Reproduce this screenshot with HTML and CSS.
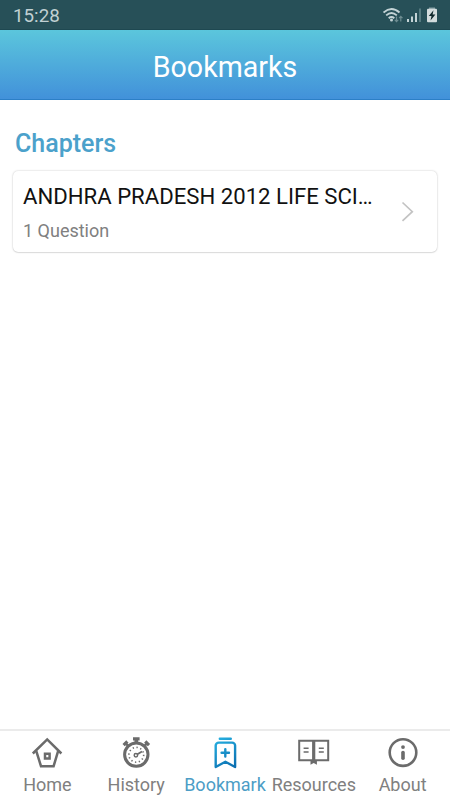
FILE: index.html
```
<!DOCTYPE html>
<html lang="en">
<head>
  <meta charset="UTF-8">
  <meta name="viewport" content="width=device-width, initial-scale=1.0">
  <title>Bookmarks</title>
  <link rel="stylesheet" href="styles.css">
</head>
<body>
  <div class="status-bar">
    <span class="clock">15:28</span>
    <svg class="status-icons" width="56" height="18" viewBox="0 0 56 18">
      <!-- wifi -->
      <g fill="none" stroke="#c3d3d6" stroke-width="1.9">
        <path d="M0.5 5.5Q8.5 -1.5 16.5 5.5"/>
        <path d="M3.2 8.4Q8.5 3.8 13.8 8.4"/>
        <path d="M5.7 11.2Q8.5 8.8 11.3 11.2"/>
      </g>
      <circle cx="8.5" cy="13" r="1.5" fill="#c3d3d6"/>
      <path d="M13.5 9.5v5M11.8 12.8l1.7 1.9 1.7-1.9M17.8 14.5v-5M16.1 11.2l1.7-1.9 1.7 1.9" fill="none" stroke="#6d8c91" stroke-width="1.2"/>
      <!-- signal -->
      <path d="M25 15v-3M29 15v-5.5M33 15V6" stroke="#c3d3d6" stroke-width="2"/>
      <path d="M37 15V1.5" stroke="#557a80" stroke-width="2"/>
      <!-- battery -->
      <path d="M46 0.5h6v2h-6z" fill="#829da1"/>
      <rect x="44" y="1.8" width="10" height="13.4" rx="1" fill="#d3dcdd"/>
      <path d="M50.5 3.2L45.8 9h2.7l-1 4.6 4.9-6h-2.8z" fill="#10282c"/>
    </svg>
  </div>

  <header class="header">
    <h1>Bookmarks</h1>
  </header>

  <main class="content">
    <h2>Chapters</h2>
    <div class="card">
      <div class="card-text">
        <div class="card-title">ANDHRA PRADESH 2012 LIFE SCI…</div>
        <div class="card-count">1 Question</div>
      </div>
      <svg class="chevron" width="14" height="22" viewBox="0 0 14 22">
        <path d="M1.5 1.5L11.3 10.7 1.5 19.9" fill="none" stroke="#c3c3c3" stroke-width="1.7"/>
      </svg>
    </div>
  </main>

  <nav class="tab-bar">
    <div class="tab">
      <svg width="36" height="36" viewBox="0 0 36 36">
        <g fill="none" stroke="currentColor" stroke-width="2.5">
          <path d="M3.8 18.5L18.2 4.4l14.2 14.1"/>
          <path d="M7.3 16.2L12 31.2h12.6l4.5-15"/>
          <path d="M16 18.8h4.6v4.6H16z"/>
        </g>
      </svg>
      <span>Home</span>
    </div>
    <div class="tab">
      <svg width="36" height="36" viewBox="0 0 36 36">
        <circle cx="18.3" cy="19.6" r="11.7" fill="none" stroke="currentColor" stroke-width="3"/>
        <path d="M15 2.2h6.6v3.4h-1.5v3.1h-3.6V5.6H15z" fill="currentColor"/>
        <path d="M5.6 10.2l3.8-3.7M27.2 6.5l3.8 3.7" stroke="currentColor" stroke-width="3.2"/>
        <path d="M7.4 8.2l3 3M29.2 8.2l-3 3" stroke="currentColor" stroke-width="2.4"/>
        <circle cx="18.3" cy="19.8" r="7.4" fill="none" stroke="currentColor" stroke-width="1.6" stroke-dasharray="1.3 2.57"/>
        <circle cx="17.9" cy="20.2" r="1.7" fill="none" stroke="currentColor" stroke-width="1.5"/>
        <path d="M19.4 19.3l4.6-2.8" stroke="currentColor" stroke-width="1.8"/>
      </svg>
      <span>History</span>
    </div>
    <div class="tab active">
      <svg width="36" height="36" viewBox="0 0 36 36">
        <defs>
          <linearGradient id="bookmarkFill" gradientUnits="userSpaceOnUse" x1="8" y1="3" x2="28" y2="34">
            <stop offset="0" stop-color="#27b2e2"/>
            <stop offset="1" stop-color="#086aad"/>
          </linearGradient>
        </defs>
        <g fill="none" stroke="url(#bookmarkFill)" stroke-width="2.4" stroke-linejoin="round" stroke-linecap="round">
          <path d="M12.8 3.8L23.8 3.81"/>
          <path d="M8.7 32V10.6a3 3 0 0 1 3-3h13.4a3 3 0 0 1 3 3V32L18.4 26.8z"/>
          <path d="M14.6 17.8L22 17.81M18.3 14.1L18.31 21.5"/>
        </g>
      </svg>
      <span>Bookmark</span>
    </div>
    <div class="tab">
      <svg width="36" height="36" viewBox="0 0 36 36">
        <path d="M3.2 5.8h29v19.4h-29z" fill="none" stroke="currentColor" stroke-width="2"/>
        <path d="M16.1 5.5h3.2v20h-3.2zM14.5 25h6.4v4.8L17.7 28l-3.2 1.8z" fill="currentColor"/>
        <path d="M7.6 13.2h5M7.6 17h5M22.8 13.2h5M22.8 17h5" stroke="currentColor" stroke-width="1.6"/>
      </svg>
      <span>Resources</span>
    </div>
    <div class="tab">
      <svg width="36" height="36" viewBox="0 0 36 36">
        <circle cx="18" cy="17.6" r="13.3" fill="none" stroke="currentColor" stroke-width="2.6"/>
        <circle cx="18" cy="12.1" r="1.9" fill="currentColor"/>
        <path d="M18 17.6v5.6" stroke="currentColor" stroke-width="3.6" stroke-linecap="round"/>
      </svg>
      <span>About</span>
    </div>
  </nav>
</body>
</html>
```

FILE: styles.css
```
* {
  box-sizing: border-box;
}
body {
  margin: 0;
  height: 100vh;
  display: flex;
  flex-direction: column;
  font-family: Roboto, sans-serif;
  background-color: #fff;
  overflow: hidden;
}
h1, h2 {
  margin: 0;
}
.status-bar {
  height: 30px;
  padding: 0 11px 0 13px;
  display: flex;
  align-items: center;
  justify-content: space-between;
  background-color: #275058;
  border-bottom: 1px solid #1e4851;
}
.status-icons {
  margin-top: 3px;
}
.clock {
  font-size: 18.8px;
  line-height: 30px;
  color: #c0d0d3;
  padding-top: 2px;
}
.header {
  height: 70px;
  display: flex;
  align-items: center;
  justify-content: center;
  background: linear-gradient(#5bc6dc, #4291da);
  border-bottom: 1px solid #2c7fc7;
}
.header h1 {
  font-size: 28.6px;
  font-weight: 400;
  color: #fff;
  padding-top: 4px;
}
.content {
  flex: 1;
  padding: 28px 13px 0;
}
.content h2 {
  font-size: 25px;
  font-weight: 500;
  line-height: 32px;
  color: #4ba1cb;
  padding-left: 2px;
}
.card {
  height: 81px;
  margin-top: 11px;
  padding: 0 22px 0 10px;
  display: flex;
  align-items: center;
  justify-content: space-between;
  border-radius: 5px;
  background-color: #fff;
  box-shadow: 0 0 2px rgba(0, 0, 0, 0.25), 0 1px 1px rgba(0, 0, 0, 0.08);
}
.card-title {
  font-size: 22.15px;
  line-height: 30px;
  color: #111;
  white-space: nowrap;
}
.card-count {
  font-size: 18px;
  line-height: 24px;
  margin-top: 8px;
  color: #808080;
}
.tab-bar {
  height: 71px;
  padding: 4px 3px 0;
  display: grid;
  grid-template-columns: repeat(5, 1fr);
  border-top: 2px solid #ebebeb;
}
.tab {
  display: flex;
  flex-direction: column;
  align-items: center;
  color: #6b6b6b;
}
.tab span {
  font-size: 18px;
  line-height: 24px;
  margin-top: 2px;
  color: #808080;
}
.tab.active span {
  color: #4c9dc6;
}
```
